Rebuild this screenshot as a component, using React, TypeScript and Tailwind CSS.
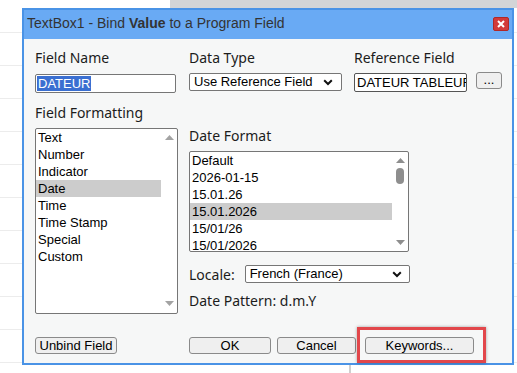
import React from "react";

const lbl = "font-['Noto_Sans',sans-serif] text-[14px] leading-[17px] text-[#1c1c1c] whitespace-nowrap";
const ctl = "font-['Liberation_Sans',Arial,sans-serif] text-[13px] text-black";
const btn =
  "font-['Liberation_Sans',Arial,sans-serif] text-[13px] text-black bg-[#efefef] border border-[#8a8a8a] rounded-[3px] h-[17px] flex items-center justify-center leading-none";

function Chevron() {
  return (
    <svg width="10" height="7" viewBox="0 0 10 7" className="shrink-0">
      <path d="M1.2 1.3 L5 5 L8.8 1.3" fill="none" stroke="#111" strokeWidth="2" />
    </svg>
  );
}

function Tri({ up, color }: { up?: boolean; color: string }) {
  return (
    <svg width="9" height="5" viewBox="0 0 9 5">
      {up ? <path d="M0 5 L4.5 0 L9 5 Z" fill={color} /> : <path d="M0 0 L4.5 5 L9 0 Z" fill={color} />}
    </svg>
  );
}

export default function App() {
  const fmts = ["Text", "Number", "Indicator", "Date", "Time", "Time Stamp", "Special", "Custom"];
  const dates = ["Default", "2026-01-15", "15.01.26", "15.01.2026", "15/01/26", "15/01/2026"];
  return (
    <div className="w-[517px] h-[373px] overflow-hidden bg-white flex flex-col bg-[repeating-linear-gradient(to_bottom,transparent_0,transparent_32px,#ececec_32px,#ececec_33px)]">
      <div className="h-[8px] flex shrink-0">
        <div className="w-[170px]" />
        <div className="flex-1 bg-[#d3d5d7]" />
      </div>
      <div className="ml-[22px] w-[492px] h-[357px] shrink-0 border-2 border-[#4a93e6] flex flex-col bg-[#f6f7f7]">
        <div className="h-[29px] bg-[#69aaf4] flex items-center justify-between pl-[3px] pr-[3px] shrink-0">
          <div className="font-['Liberation_Sans',Arial,sans-serif] text-[14px] text-[#333] pb-[2px] whitespace-nowrap">
            TextBox1 - Bind <span className="font-bold">Value</span> to a Program Field
          </div>
          <div className="w-[16px] h-[14px] mb-[1px] bg-[#d23a3a] border border-[#b02828] rounded-[2px] flex items-center justify-center">
            <svg width="8" height="8" viewBox="0 0 8 8">
              <path d="M1 1 L7 7 M7 1 L1 7" stroke="#fff" strokeWidth="2" />
            </svg>
          </div>
        </div>
        <div className="flex flex-col pl-[11px] pt-[10px]">
          {/* Row 1 */}
          <div className="flex">
            <div className="w-[143px] flex flex-col">
              <div className={lbl}>Field Name</div>
              <div className="mt-[8px] w-[141px] h-[19px] bg-white border border-[#767676] rounded-[2px] flex items-center pl-[1px]">
                <span className={`${ctl} bg-[#3a6fd1] text-white leading-[15px] px-[1px]`}>DATEUR</span>
              </div>
            </div>
            <div className="ml-[11px] w-[153px] flex flex-col">
              <div className={lbl}>Data Type</div>
              <div className="mt-[7px] w-[153px] h-[18px] bg-white border border-[#767676] rounded-[2px] flex items-center justify-between pl-[4px] pr-[8px]">
                <span className={ctl}>Use Reference Field</span>
                <Chevron />
              </div>
            </div>
            <div className="ml-[12px] flex flex-col">
              <div className={lbl}>Reference Field</div>
              <div className="mt-[7px] flex items-start">
                <div className="w-[113px] h-[19px] bg-white border border-[#555] rounded-[2px] flex items-center pl-[2px] overflow-hidden">
                  <span className={`${ctl} whitespace-nowrap`}>DATEUR TABLEUR</span>
                </div>
                <div className="ml-[9px] -mt-[1px] w-[26px] h-[17px] bg-[#efefef] border border-[#8a8a8a] rounded-[3px] flex items-center justify-center">
                  <span className={`${ctl} text-[11px] leading-none pb-[3px]`}>...</span>
                </div>
              </div>
            </div>
          </div>
          {/* Row 2 */}
          <div className="flex mt-[11px]">
            <div className="w-[143px] flex flex-col">
              <div className={lbl}>Field Formatting</div>
              <div className="mt-[7px] w-[143px] h-[186px] bg-white border border-[#767676] rounded-[2px] flex">
                <div className="flex-1 flex flex-col">
                  {fmts.map((f) => (
                    <div
                      key={f}
                      className={`${ctl} h-[17px] leading-[17px] pl-[2px] ${f === "Date" ? "bg-[#cccccc]" : ""}`}
                    >
                      {f}
                    </div>
                  ))}
                </div>
                <div className="w-[16px] flex flex-col items-center justify-between pt-[6px] pb-[7px]">
                  <Tri up color="#a3a3a3" />
                  <Tri color="#a3a3a3" />
                </div>
              </div>
            </div>
            <div className="ml-[11px] mt-[23px] flex flex-col">
              <div className={lbl}>Date Format</div>
              <div className="mt-[7px] w-[220px] h-[101px] bg-white border border-[#767676] rounded-[2px] flex overflow-hidden">
                <div className="flex-1 flex flex-col">
                  {dates.map((d) => (
                    <div
                      key={d}
                      className={`${ctl} h-[17px] leading-[17px] pl-[2px] ${d === "15.01.2026" ? "bg-[#cccccc]" : ""}`}
                    >
                      {d}
                    </div>
                  ))}
                </div>
                <div className="w-[16px] flex flex-col items-center pt-[6px] pb-[6px]">
                  <Tri up color="#8e8e8e" />
                  <div className="mt-[5px] w-[8px] h-[16px] rounded-[4px] bg-[#8e8e8e]" />
                  <div className="flex-1" />
                  <Tri color="#8e8e8e" />
                </div>
              </div>
              <div className="mt-[13px] flex items-center">
                <div className={lbl}>Locale:</div>
                <div className="ml-[10px] w-[165px] h-[18px] bg-white border border-[#767676] rounded-[2px] flex items-center justify-between pl-[4px] pr-[7px]">
                  <span className={ctl}>French (France)</span>
                  <Chevron />
                </div>
              </div>
              <div className={`${lbl} mt-[9px]`}>Date Pattern: d.m.Y</div>
            </div>
          </div>
          {/* Buttons */}
          <div className="flex mt-[23px]">
            <div className={`${btn} w-[82px]`}>Unbind Field</div>
            <div className={`${btn} w-[82px] ml-[72px]`}>OK</div>
            <div className={`${btn} w-[79px] ml-[6px]`}>Cancel</div>
            <div className="relative ml-[9px]">
              <div className={`${btn} w-[109px]`}>Keywords...</div>
              <div className="absolute left-[-8px] right-[-12px] top-[-10px] bottom-[-9px] border-[3px] border-[#e2474b] shadow-[0_0_3px_rgba(0,0,0,0.35)]" />
            </div>
          </div>
        </div>
      </div>
      <div className="flex-1 flex">
        <div className="w-[349px]" />
        <div className="w-[2px] bg-[#cfcfcf]" />
      </div>
    </div>
  );
}
